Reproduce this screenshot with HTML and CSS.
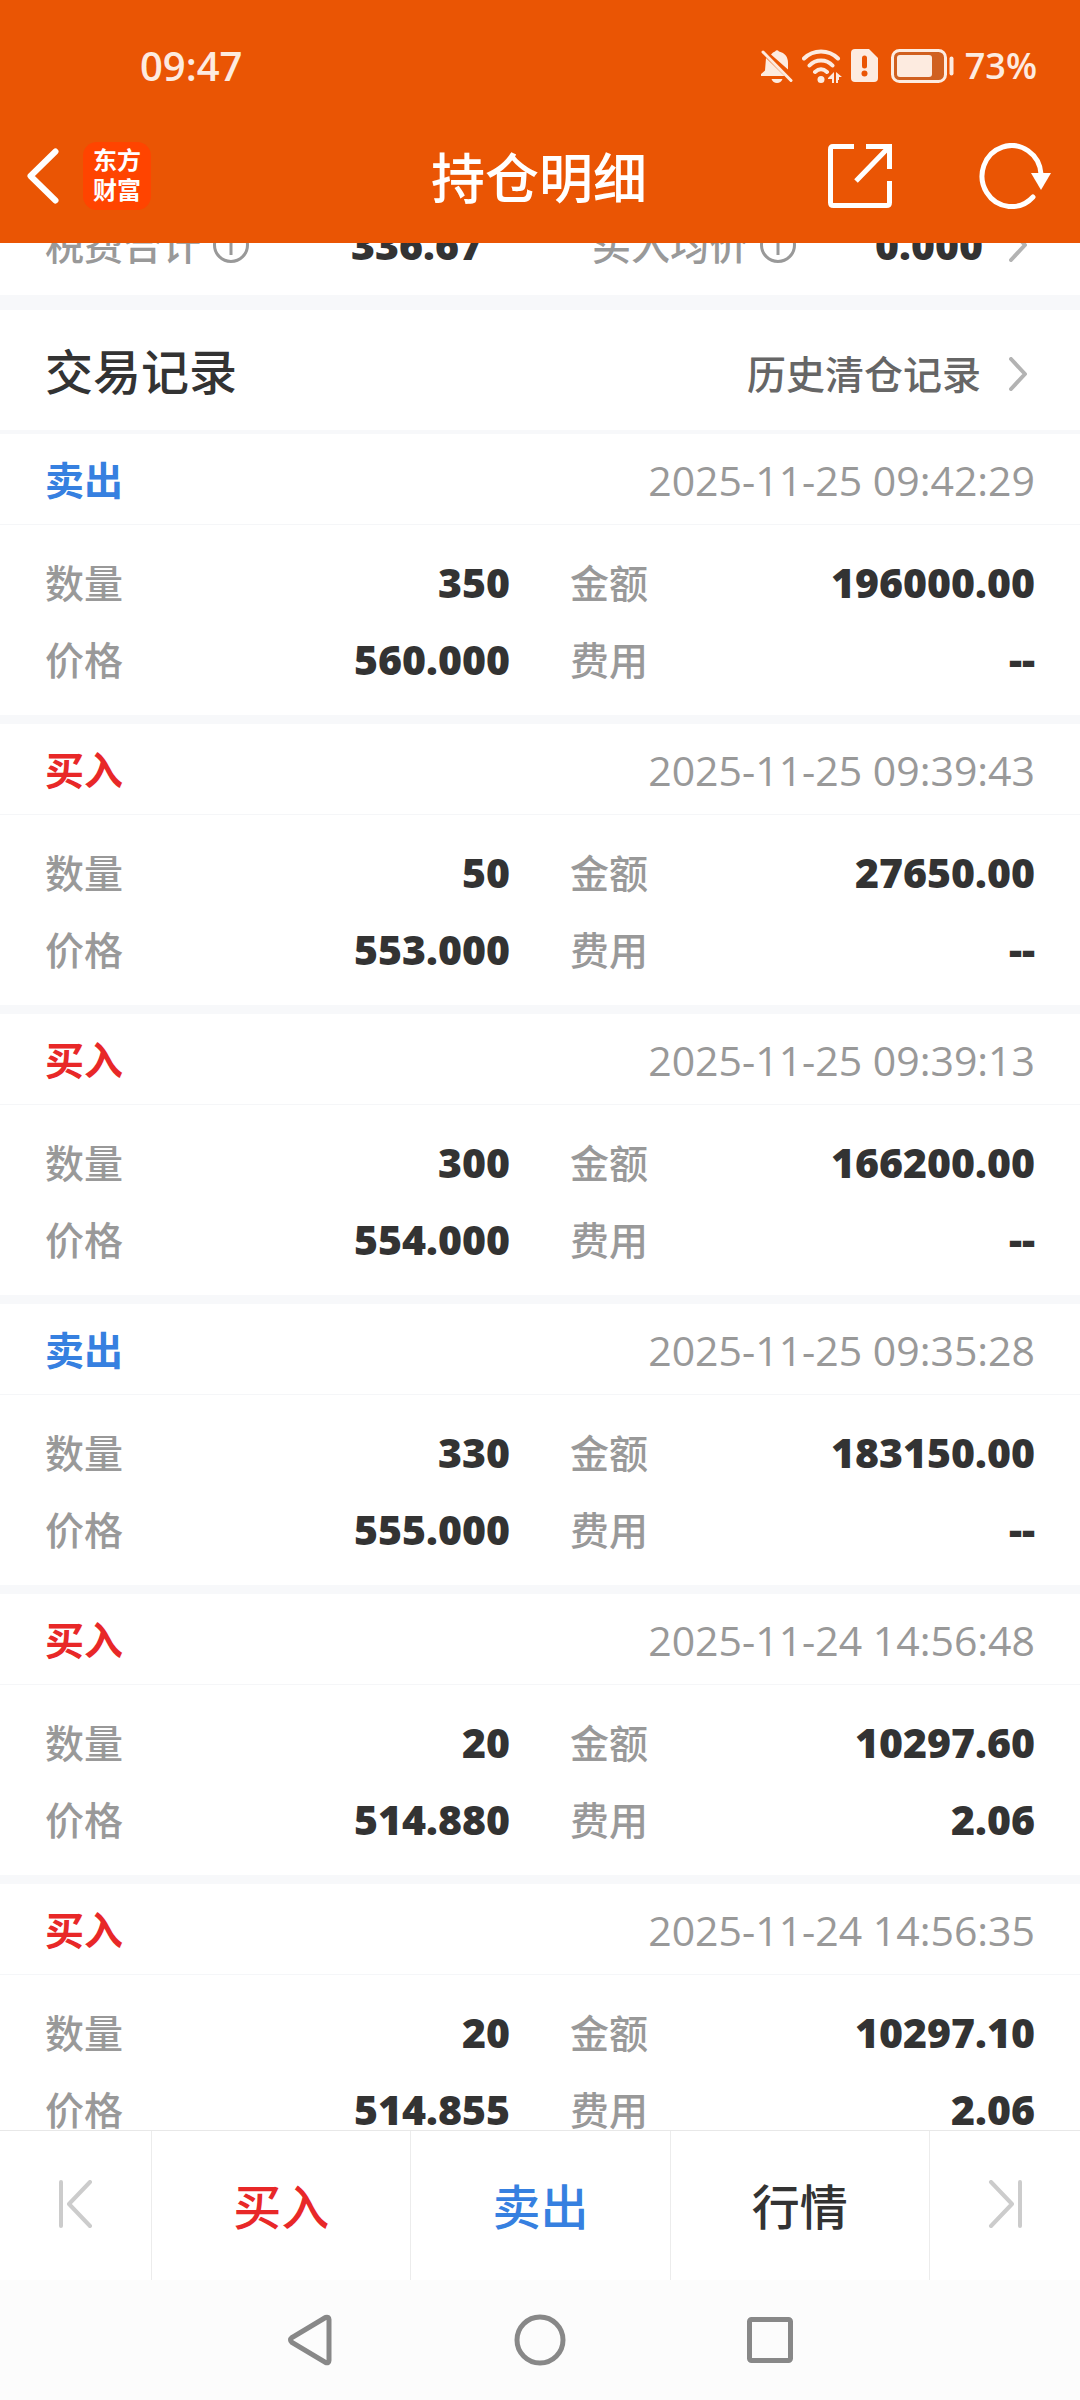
FILE: index.html
```html
<!DOCTYPE html>
<html lang="zh-CN">
<head>
<meta charset="utf-8">
<meta name="viewport" content="width=device-width, initial-scale=1">
<title>持仓明细</title>
<link rel="stylesheet" href="styles.css">
</head>
<body>
<header class="top">
  <div class="status">
    <time class="clock">09:47</time>
    <div class="status-icons">
      <svg class="bell" width="32" height="35" viewBox="0 0 32 35" fill="currentColor"><path d="M10 5.500Q12 3 14 2.500Q16 0 18 2.500C24 4 27 8 27 14v6.500zM5 9l18.500 18H0v-2l4-3.500zM10.500 30h11q-1.500 4-5.500 4t-5.500-4z"/><path d="M2 3l28 28.500" fill="none" stroke="currentColor" stroke-width="3" stroke-linecap="round"/></svg>
      <svg class="wifi" width="41" height="35" viewBox="0 0 41 35" fill="none" stroke="currentColor" stroke-width="4" stroke-linecap="round"><path d="M2 9.500Q9 2.500 19 2.500T36 9.500M7.500 16.500Q12 11.500 19 11.500T30.500 16.500M13 23q6-5.500 12 0"/><circle cx="19" cy="30.500" r="3.500" fill="currentColor" stroke="none"/><path d="M26 29l6-6v11h-2v-4H26zM34 23l6 5h-3v3h-1v3h-2z" fill="currentColor" stroke="none"/></svg>
      <svg class="sim" width="27" height="34" viewBox="0 0 27 34"><path d="M4 0h14l9 9v20q0 4-4 4H4q-4 0-4-4V4q0-4 4-4z" fill="currentColor"/><path d="M13.500 9v8" stroke="#ea5504" stroke-width="5" stroke-linecap="round"/><circle cx="13.500" cy="24.500" r="3" fill="#ea5504"/></svg>
      <svg class="battery" width="64" height="34" viewBox="0 0 64 34"><rect x="1.500" y="1.500" width="53" height="31" rx="7" fill="#d06020" stroke="currentColor" stroke-width="3"/><rect x="6" y="6" width="35" height="22" rx="3" fill="currentColor"/><path d="M60.500 9.500v15" stroke="currentColor" stroke-width="4" stroke-linecap="round"/></svg>
      <span class="percent">73%</span>
    </div>
  </div>
  <div class="appbar">
    <div class="appbar-left">
      <button class="icon-button" aria-label="返回"><svg width="32" height="56" viewBox="0 0 32 56" fill="none" stroke="currentColor" stroke-width="6" stroke-linecap="round" stroke-linejoin="round"><path d="M28.500 3.500L3.500 28l25 24.500"/></svg></button>
      <span class="logo">东方<br>财富</span>
    </div>
    <h1 class="title">持仓明细</h1>
    <div class="appbar-right">
      <button class="icon-button" aria-label="分享"><svg width="64" height="64" viewBox="0 0 64 64" fill="none" stroke="currentColor" stroke-width="5"><path d="M26 2.500H5Q2.500 2.500 2.500 5.500v53q0 3 3 3h53q3 0 3-3V37M38 2.500h23.500V25M61 3L28 37"/></svg></button>
      <button class="icon-button" aria-label="刷新"><svg width="72" height="66" viewBox="0 0 72 66" fill="none" stroke="currentColor" stroke-width="5" stroke-linecap="round"><path d="M54 54A29.500 30.500 0 1 1 62 31"/><path d="M52 30h20L62 47z" fill="currentColor" stroke="none"/></svg></button>
    </div>
  </div>
</header>

<main class="content">
  <div class="scroll">
    <section class="summary">
      <dl class="summary-list">
        <div class="pair"><dt>税费合计 <svg class="info" viewBox="0 0 36 36"><use href="#info"/></svg></dt><dd>336.67</dd></div>
        <div class="pair"><dt>买入均价 <svg class="info" viewBox="0 0 36 36"><use href="#info"/></svg></dt><dd>0.000</dd></div>
      </dl>
      <svg class="chevron" viewBox="0 0 18 34"><use href="#chevron"/></svg>
    </section>

    <section class="records">
      <div class="records-head">
        <h2>交易记录</h2>
        <a class="history" href="#">历史清仓记录 <svg class="chevron" viewBox="0 0 18 34"><use href="#chevron"/></svg></a>
      </div>

      <article class="record">
        <div class="record-head"><h3 class="sell">卖出</h3><time>2025-11-25 09:42:29</time></div>
        <dl class="figures">
          <div class="pair"><dt>数量</dt><dd>350</dd></div><div class="pair"><dt>金额</dt><dd>196000.00</dd></div>
          <div class="pair"><dt>价格</dt><dd>560.000</dd></div><div class="pair"><dt>费用</dt><dd>--</dd></div>
        </dl>
      </article>
      <article class="record">
        <div class="record-head"><h3 class="buy">买入</h3><time>2025-11-25 09:39:43</time></div>
        <dl class="figures">
          <div class="pair"><dt>数量</dt><dd>50</dd></div><div class="pair"><dt>金额</dt><dd>27650.00</dd></div>
          <div class="pair"><dt>价格</dt><dd>553.000</dd></div><div class="pair"><dt>费用</dt><dd>--</dd></div>
        </dl>
      </article>
      <article class="record">
        <div class="record-head"><h3 class="buy">买入</h3><time>2025-11-25 09:39:13</time></div>
        <dl class="figures">
          <div class="pair"><dt>数量</dt><dd>300</dd></div><div class="pair"><dt>金额</dt><dd>166200.00</dd></div>
          <div class="pair"><dt>价格</dt><dd>554.000</dd></div><div class="pair"><dt>费用</dt><dd>--</dd></div>
        </dl>
      </article>
      <article class="record">
        <div class="record-head"><h3 class="sell">卖出</h3><time>2025-11-25 09:35:28</time></div>
        <dl class="figures">
          <div class="pair"><dt>数量</dt><dd>330</dd></div><div class="pair"><dt>金额</dt><dd>183150.00</dd></div>
          <div class="pair"><dt>价格</dt><dd>555.000</dd></div><div class="pair"><dt>费用</dt><dd>--</dd></div>
        </dl>
      </article>
      <article class="record">
        <div class="record-head"><h3 class="buy">买入</h3><time>2025-11-24 14:56:48</time></div>
        <dl class="figures">
          <div class="pair"><dt>数量</dt><dd>20</dd></div><div class="pair"><dt>金额</dt><dd>10297.60</dd></div>
          <div class="pair"><dt>价格</dt><dd>514.880</dd></div><div class="pair"><dt>费用</dt><dd>2.06</dd></div>
        </dl>
      </article>
      <article class="record">
        <div class="record-head"><h3 class="buy">买入</h3><time>2025-11-24 14:56:35</time></div>
        <dl class="figures">
          <div class="pair"><dt>数量</dt><dd>20</dd></div><div class="pair"><dt>金额</dt><dd>10297.10</dd></div>
          <div class="pair"><dt>价格</dt><dd>514.855</dd></div><div class="pair"><dt>费用</dt><dd>2.06</dd></div>
        </dl>
      </article>
    </section>
  </div>
</main>

<footer>
  <div class="actions">
    <button class="step" aria-label="上一个"><svg width="34" height="48" viewBox="0 0 34 48" fill="none" stroke="currentColor" stroke-width="4" stroke-linecap="round" stroke-linejoin="round"><path d="M2 2v44M31 2L10 24l21 22"/></svg></button>
    <button class="buy">买入</button>
    <button class="sell">卖出</button>
    <button>行情</button>
    <button class="step" aria-label="下一个"><svg width="34" height="48" viewBox="0 0 34 48" fill="none" stroke="currentColor" stroke-width="4" stroke-linecap="round" stroke-linejoin="round"><path d="M32 2v44M3 2l21 22L3 46"/></svg></button>
  </div>
  <nav class="system">
    <button aria-label="后退"><svg width="44" height="52" viewBox="0 0 44 52"><path d="M37.500 3.500L4 23.500q-3 2.500 0 5L37.500 48.500q3.500 1 3.500-2v-41q0-3-3.500-2z"/></svg></button>
    <button aria-label="主屏幕"><svg width="52" height="52" viewBox="0 0 52 52"><circle cx="26" cy="26" r="23"/></svg></button>
    <button aria-label="最近任务"><svg width="46" height="46" viewBox="0 0 46 46"><rect x="2.500" y="2.500" width="41" height="41" rx="2"/></svg></button>
  </nav>
</footer>

<svg class="symbols" aria-hidden="true">
  <symbol id="chevron" viewBox="0 0 18 34"><path d="M2 2l14 15L2 32" fill="none" stroke="#b3b3b3" stroke-width="4" stroke-linecap="round" stroke-linejoin="round"/></symbol>
  <symbol id="info" viewBox="0 0 36 36" fill="none" stroke="#999" stroke-width="3"><circle cx="18" cy="18" r="16.500"/><path d="M18 14v14M18 8v3"/></symbol>
</svg>
</body>
</html>
```
FILE: styles.css
```css
* { box-sizing: border-box; }

body {
  margin: 0;
  height: 100vh;
  display: flex;
  flex-direction: column;
  background: #fff;
  color: #333;
  font-family: "Open Sans", "Noto Sans CJK SC", sans-serif;
  font-size: 39px;
  line-height: 48px;
}

h1, h2, h3, dl, dd { margin: 0; }
svg { display: block; flex: none; }
a { color: inherit; text-decoration: none; }

button {
  padding: 0;
  border: 0;
  background: none;
  color: inherit;
  font: inherit;
}

.symbols { position: absolute; width: 0; height: 0; }
.buy { color: #e82828; }
.sell { color: #3680e0; }

/* status bar and title */
.top { background: #ea5504; color: #fff; }

.status {
  height: 108px;
  padding: 24px 43px 0 140px;
  display: flex;
  align-items: center;
  justify-content: space-between;
  color: #fdebe0;
  font-weight: 600;
}
.clock { font-size: 40px; }
.percent { font-size: 36px; }
.status-icons { display: flex; align-items: center; }
.bell { margin-right: 9px; }
.wifi { margin-right: 8px; }
.sim { margin-right: 13px; }
.battery { margin-right: 10px; }

.appbar {
  height: 135px;
  padding: 0 29px 0 27px;
  display: grid;
  grid-template-columns: 1fr auto 1fr;
  align-items: center;
}
.appbar-left { display: flex; align-items: center; gap: 24px; }
.appbar-right { display: flex; align-items: center; justify-content: flex-end; gap: 87px; }
.logo {
  width: 68px;
  padding: 3px 0 5px;
  border-radius: 14px;
  background: #ff4400;
  text-align: center;
  font-size: 24px;
  font-weight: 700;
  line-height: 30px;
}
.title { padding-top: 4px; font-size: 54px; font-weight: 500; line-height: 72px; }

/* scrolling area */
.content { flex: 1; min-height: 0; overflow: hidden; }
.scroll { margin-top: -37px; }

.pair { display: flex; align-items: center; justify-content: space-between; min-height: 77px; }
dt { display: flex; align-items: center; gap: 12px; color: #999; font-weight: 500; }
dd { padding-bottom: 2px; font-size: 41px; font-weight: 800; }
.info { width: 36px; height: 36px; }
.chevron { width: 18px; height: 34px; }

.summary {
  padding: 0 53px 12px 45px;
  display: flex;
  align-items: center;
  gap: 26px;
  border-bottom: 15px solid #f7f8fa;
}
.summary-list {
  flex: 1;
  display: grid;
  grid-template-columns: 28fr 25fr;
  column-gap: 109px;
}

.records-head {
  height: 124px;
  padding: 4px 53px 0 45px;
  display: flex;
  align-items: center;
  justify-content: space-between;
  border-bottom: 4px solid #f7f8fa;
}
h2 { font-size: 48px; font-weight: 500; }
.history { padding-top: 4px; display: flex; align-items: center; gap: 28px; color: #666; font-weight: 500; }

.record { border-bottom: 9px solid #f7f8fa; }
.record-head {
  height: 91px;
  padding: 2px 45px 0;
  display: flex;
  align-items: center;
  justify-content: space-between;
  border-bottom: 1px solid #f5f6f8;
}
h3 { font-size: 39px; font-weight: 700; }
.record-head time { color: #999; font-size: 41px; font-weight: 500; }
.figures {
  padding: 19px 45px 17px;
  display: grid;
  grid-template-columns: 1fr 1fr;
  column-gap: 60px;
}

/* bottom bars */
.actions {
  height: 150px;
  display: flex;
  border-top: 1px solid #e8e8e8;
}
.actions button { flex: 1; padding-top: 2px; font-size: 48px; font-weight: 500; }
.actions button + button { border-left: 1px solid #ececec; }
.actions .step { flex: 0 0 14%; padding: 0 0 4px; display: flex; align-items: center; justify-content: center; color: #ccc; }

.system { height: 120px; padding: 0 18%; display: flex; background: #fcfcfc; }
.system button { flex: 1; display: flex; align-items: center; justify-content: center; }
.system svg { fill: none; stroke: #888; stroke-width: 5; }
```
